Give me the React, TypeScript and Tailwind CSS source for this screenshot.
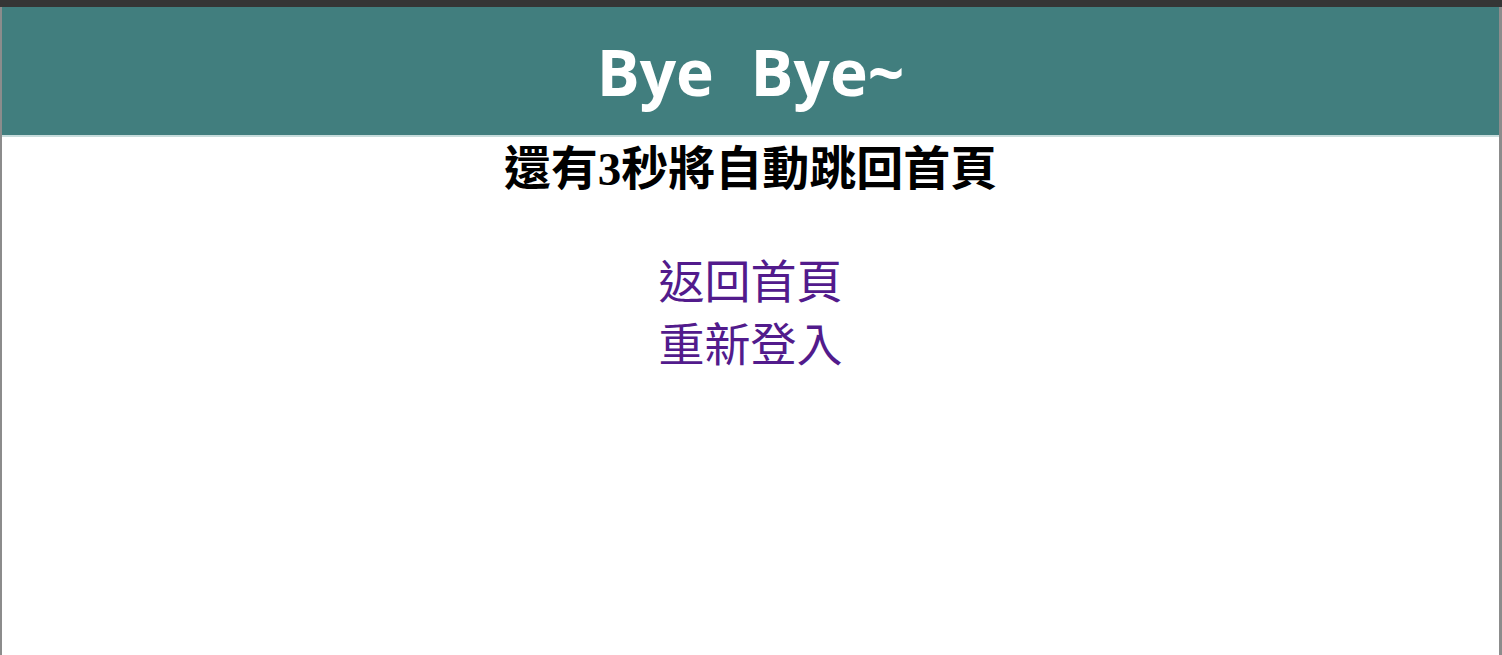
export default function App() {
  return (
    <div className="w-[1502px] h-[655px] bg-white overflow-hidden flex flex-col">
      <div className="h-[7px] bg-[#353535] shrink-0" />
      <div className="flex-1 flex flex-col border-l-2 border-r-[3px] border-[#8c8c8c]">
        <header className="h-[130px] shrink-0 bg-[#417e7e] border-b-2 border-b-[#c7dcdc] flex items-center justify-center">
          <h1
            className="text-white font-bold text-[64px] leading-none pt-[2px] [word-spacing:20px]"
            style={{ fontFamily: '"Open Sans", "Noto Sans", sans-serif' }}
          >
            Bye Bye~
          </h1>
        </header>
        <main className="flex flex-col items-center">
          <h2
            className="text-black font-bold text-[47px] leading-[56px] mt-[4px]"
            style={{ fontFamily: '"Liberation Serif", "Noto Sans CJK TC", serif' }}
          >
            還有3秒將自動跳回首頁
          </h2>
          <nav
            className="flex flex-col items-center mt-[50px] text-[46px] leading-[63px]"
            style={{ fontFamily: '"Noto Sans CJK TC", sans-serif' }}
          >
            <a href="#" className="text-[#521b8c]">返回首頁</a>
            <a href="#" className="text-[#521b8c]">重新登入</a>
          </nav>
        </main>
      </div>
    </div>
  );
}
